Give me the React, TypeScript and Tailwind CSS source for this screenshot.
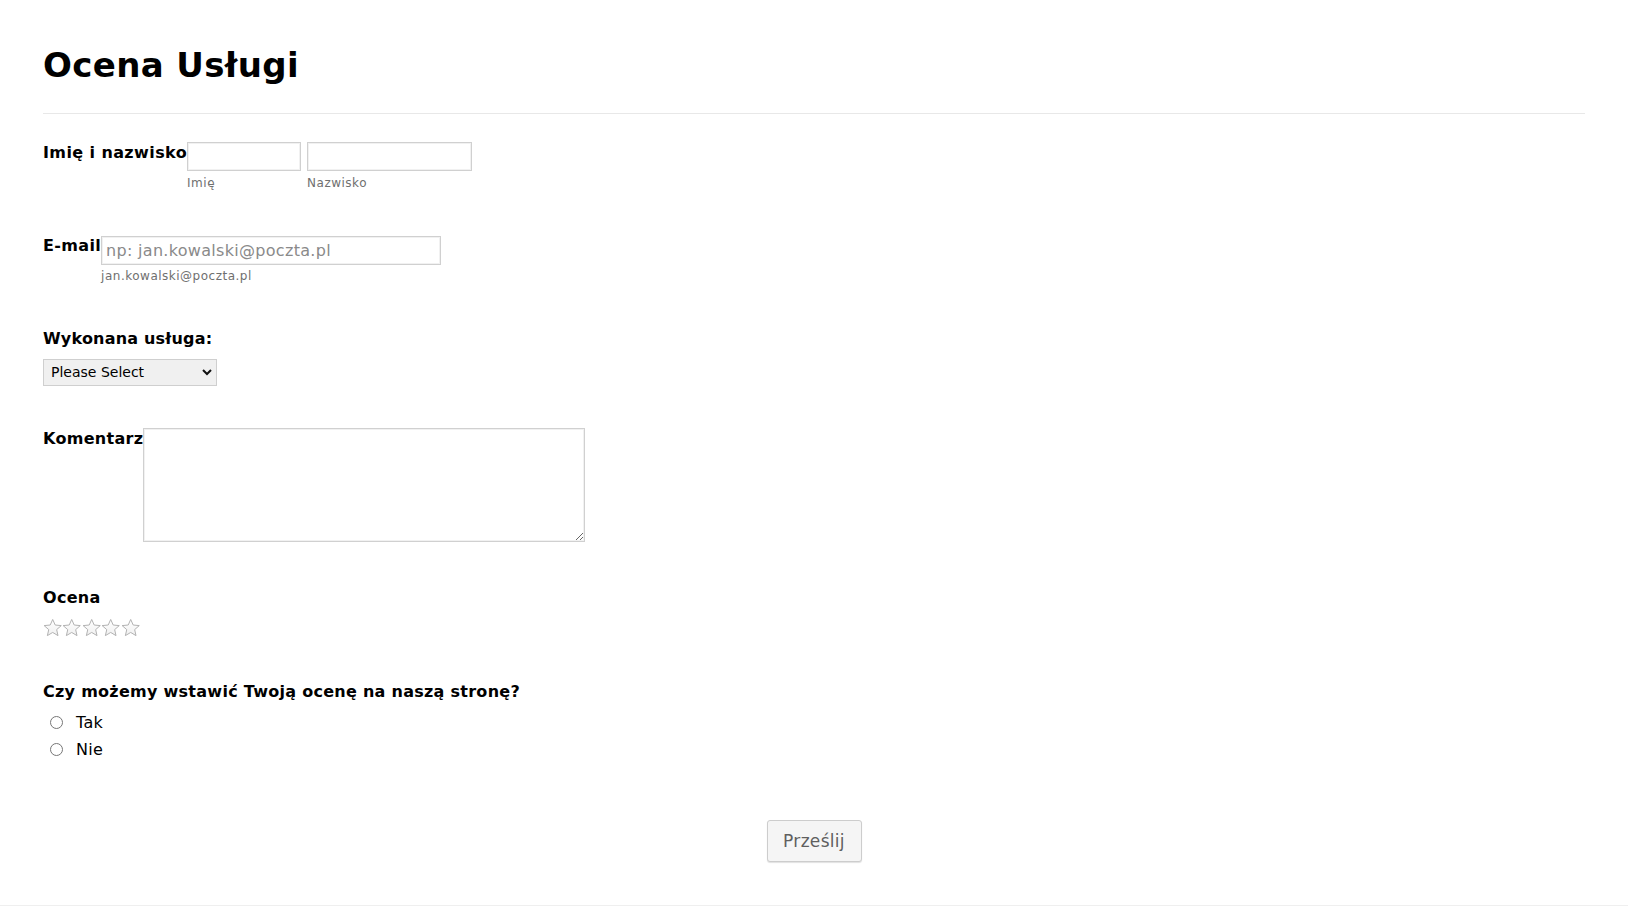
import { useState } from "react";

const font = { fontFamily: '"DejaVu Sans", Verdana, sans-serif' };

function Star() {
  return (
    <svg width="19.4" height="19.4" viewBox="0 0 24 24" className="block">
      <defs>
        <linearGradient id="starfill" x1="0" y1="0" x2="0" y2="1">
          <stop offset="0" stopColor="#ffffff" />
          <stop offset="1" stopColor="#f0f0f0" />
        </linearGradient>
      </defs>
      <path
        d="M12 1.8l3.1 6.9 7.5.7-5.7 5 1.7 7.4L12 17.9l-6.6 3.9 1.7-7.4-5.7-5 7.5-.7z"
        fill="url(#starfill)"
        stroke="#b0b0b0"
        strokeWidth="1.2"
        strokeLinejoin="round"
      />
    </svg>
  );
}

export default function App() {
  const [answer, setAnswer] = useState<string>("");

  return (
    <div className="min-h-[906px] bg-white text-black" style={font}>
      <div className="border-b border-[#efefef] px-[43px] pb-[43px]">
        {/* naglowek */}
        <div className="border-b border-[#e8e8e8] pt-[45px] pb-[28px]">
          <h1 className="text-[34px] font-bold leading-[40px] tracking-[0.35px]">Ocena Usługi</h1>
        </div>

        {/* imie i nazwisko */}
        <div className="mt-[28px] flex items-start">
          <label className="pt-[1px] text-[16px] font-bold leading-[20px] tracking-[0.4px]">Imię i nazwisko</label>
          <div className="flex gap-[6px]">
            <div className="flex flex-col">
              <input className="h-[29px] w-[114px] border border-[#d0d0d0] px-1 text-[16px] shadow-[inset_0_0_0_1px_#f1f1f1] outline-none" />
              <span className="mt-[4px] text-[12px] leading-[16px] tracking-[0.5px] text-[#6f6f6f]">Imię</span>
            </div>
            <div className="flex flex-col">
              <input className="h-[29px] w-[165px] border border-[#d0d0d0] px-1 text-[16px] shadow-[inset_0_0_0_1px_#f1f1f1] outline-none" />
              <span className="mt-[4px] text-[12px] leading-[16px] tracking-[0.5px] text-[#6f6f6f]">Nazwisko</span>
            </div>
          </div>
        </div>

        {/* email */}
        <div className="mt-[45px] flex items-start">
          <label className="text-[16px] font-bold leading-[20px] tracking-[0.35px]">E-mail</label>
          <div className="flex flex-col">
            <input
              placeholder="np: jan.kowalski@poczta.pl"
              className="h-[29px] w-[340px] border border-[#d0d0d0] px-[4px] text-[16px] tracking-[0.3px] shadow-[inset_0_0_0_1px_#f1f1f1] outline-none placeholder:text-[#8a8a8a]"
            />
            <span className="mt-[3px] text-[12px] leading-[16px] tracking-[0.5px] text-[#6f6f6f]">jan.kowalski@poczta.pl</span>
          </div>
        </div>

        {/* usluga */}
        <div className="mt-[45px] flex flex-col items-start">
          <label className="text-[16px] font-bold leading-[20px] tracking-[0.2px]">Wykonana usługa:</label>
          <div className="relative mt-[10px]">
            <select className="h-[27px] w-[174px] appearance-none border border-[#cfcfcf] bg-[#f0f0f0] pl-[7px] text-[14px] text-black outline-none">
              <option>Please Select</option>
              <option>Konsultacja</option>
              <option>Naprawa</option>
              <option>Instalacja</option>
            </select>
            <svg
              className="pointer-events-none absolute right-[5px] top-[9px]"
              width="10"
              height="8"
              viewBox="0 0 10 8"
            >
              <path d="M1 2l4 4 4-4" fill="none" stroke="#111" strokeWidth="2" />
            </svg>
          </div>
        </div>

        {/* komentarz */}
        <div className="mt-[42px] flex items-start">
          <label className="pt-[1px] text-[16px] font-bold leading-[20px] tracking-[0.3px]">Komentarz</label>
          <textarea className="h-[114px] w-[442px] border border-[#d0d0d0] p-1 text-[16px] shadow-[inset_0_0_0_1px_#f1f1f1] outline-none" />
        </div>

        {/* ocena */}
        <div className="mt-[46px] flex flex-col items-start">
          <label className="text-[16px] font-bold leading-[20px] tracking-[0.3px]">Ocena</label>
          <div className="mt-[10px] flex">
            {[1, 2, 3, 4, 5].map((n) => (
              <Star key={n} />
            ))}
          </div>
        </div>

        {/* zgoda */}
        <div className="mt-[45px]">
          <div className="text-[16px] font-bold leading-[20px] tracking-[0.27px]">
            Czy możemy wstawić Twoją ocenę na naszą stronę?
          </div>
          <div className="mt-[7px] flex flex-col">
            {["Tak", "Nie"].map((opt) => (
              <label key={opt} className="flex h-[27px] items-center text-[16px] tracking-[0.3px]">
                <input
                  type="radio"
                  name="zgoda"
                  checked={answer === opt}
                  onChange={() => setAnswer(opt)}
                  className="ml-[7px] h-[13px] w-[13px]"
                />
                <span className="ml-[13px]">{opt}</span>
              </label>
            ))}
          </div>
        </div>

        {/* przycisk */}
        <div className="mt-[57px] flex justify-center">
          <button
            type="button"
            className="h-[42px] w-[95px] rounded-[3px] border border-[#cdcdcd] bg-[#f5f5f5] text-[17px] tracking-[0.3px] text-[#5f5f5f] shadow-[0_1px_1px_rgba(0,0,0,0.12)]"
          >
            Prześlij
          </button>
        </div>
      </div>
    </div>
  );
}
